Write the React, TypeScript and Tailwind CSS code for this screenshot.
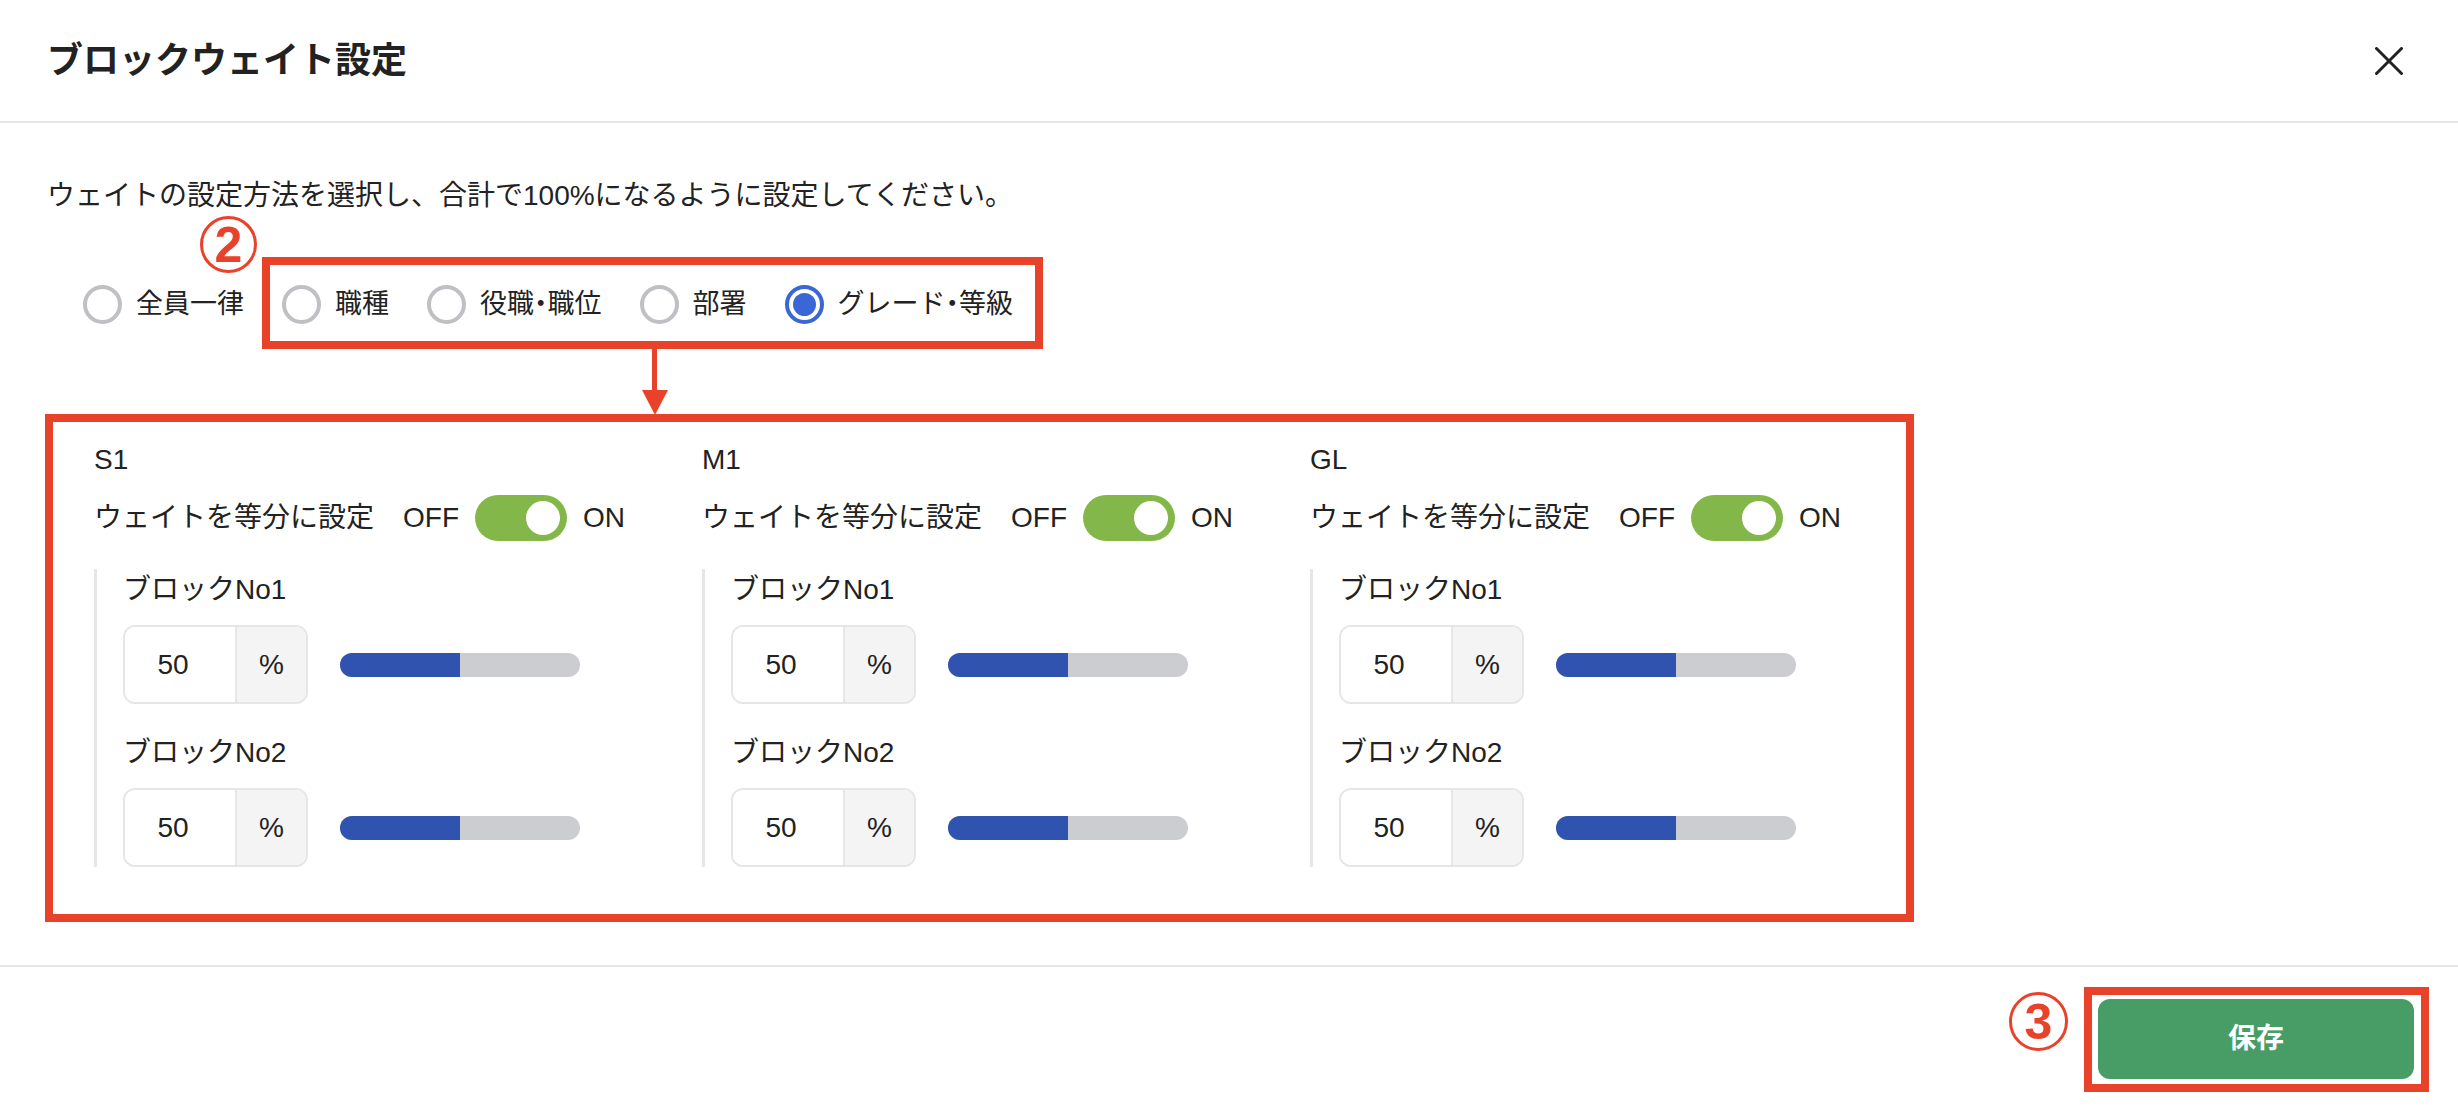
import React from "react";

const RED = "#e8432a";

function Radio({ checked }: { checked?: boolean }) {
  if (checked) {
    return (
      <div className="w-[39px] h-[39px] rounded-full border-[4px] border-[#3a66d6] flex items-center justify-center shrink-0">
        <div className="w-[23px] h-[23px] rounded-full bg-[#3a66d6]" />
      </div>
    );
  }
  return <div className="w-[39px] h-[39px] rounded-full border-[4px] border-[#bfbfc4] shrink-0" />;
}

function RadioItem({ label, checked }: { label: string; checked?: boolean }) {
  const parts = label.split("・");
  return (
    <div className="flex items-center gap-[14px]">
      <Radio checked={checked} />
      <span className="text-[27px] leading-[42px] text-[#222] whitespace-nowrap">
        {parts.map((p, i) => (
          <React.Fragment key={i}>
            {i > 0 && <span className="[font-feature-settings:'palt']">・</span>}
            {p}
          </React.Fragment>
        ))}
      </span>
    </div>
  );
}

function WeightInput() {
  return (
    <div className="flex items-center gap-[32px]">
      <div className="flex w-[185px] h-[79px] rounded-[12px] border-2 border-[#e6e6ea] overflow-hidden">
        <div className="w-[110px] flex items-center justify-center pr-[14px] text-[28px] text-[#222] bg-white">50</div>
        <div className="flex-1 flex items-center justify-center text-[28px] text-[#222] bg-[#f4f4f5] border-l-2 border-[#e6e6ea]">
          %
        </div>
      </div>
      <div className="w-[240px] h-[24px] rounded-full bg-[#cccdd0] overflow-hidden flex">
        <div className="w-1/2 h-full bg-[#3053b0]" />
      </div>
    </div>
  );
}

function Column({ name }: { name: string }) {
  return (
    <div className="flex flex-col">
      <div className="text-[28px] leading-[42px] text-[#222]">{name}</div>
      <div className="flex items-center mt-[14px]">
        <span className="text-[28px] leading-[42px] text-[#222]">ウェイトを等分に設定</span>
        <span className="text-[28px] leading-[42px] text-[#222] ml-[29px]">OFF</span>
        <div className="ml-[16px] w-[92px] h-[46px] rounded-full bg-[#84b74a] flex items-center justify-end pr-[7px]">
          <div className="w-[34px] h-[34px] rounded-full bg-white" />
        </div>
        <span className="text-[28px] leading-[42px] text-[#222] ml-[16px]">ON</span>
      </div>
      <div className="mt-[28px] border-l-[3px] border-[#e6e6ea] pl-[26px] flex flex-col">
        <div className="text-[28px] leading-[42px] text-[#222]">ブロックNo1</div>
        <div className="mt-[14px]">
          <WeightInput />
        </div>
        <div className="mt-[28px] text-[28px] leading-[42px] text-[#222]">ブロックNo2</div>
        <div className="mt-[14px]">
          <WeightInput />
        </div>
      </div>
    </div>
  );
}

function Circled({ n, className }: { n: string; className: string }) {
  return (
    <div
      className={
        "absolute rounded-full border-[3px] border-[#e8432a] flex items-center justify-center text-[#e8432a] font-bold text-[50px] leading-none " +
        className
      }
    >
      {n}
    </div>
  );
}

export default function App() {
  return (
    <div className="relative w-full h-[1110px] bg-white flex flex-col font-['Liberation_Sans','Noto_Sans_CJK_JP',sans-serif] overflow-hidden">
      {/* header */}
      <div className="h-[123px] shrink-0 border-b-2 border-[#e6e6ea] flex items-center justify-between pl-[47px] pr-[55px]">
        <h1 className="text-[36px] font-bold text-[#222] leading-none">ブロックウェイト設定</h1>
        <svg width="28" height="28" viewBox="0 0 28 28" className="text-[#222]">
          <path d="M1.5 1.5 L26.5 26.5 M26.5 1.5 L1.5 26.5" stroke="currentColor" strokeWidth="3" strokeLinecap="round" />
        </svg>
      </div>

      {/* body */}
      <div className="flex-1 pl-[47px] pt-[52px]">
        <p className="text-[28px] leading-[42px] text-[#222]">
          ウェイトの設定方法を選択し、合計で100%になるように設定してください。
        </p>
        <div className="mt-[66px] pl-[36px] flex items-center gap-[38px]">
          <RadioItem label="全員一律" />
          <RadioItem label="職種" />
          <RadioItem label="役職・職位" />
          <RadioItem label="部署" />
          <RadioItem label="グレード・等級" checked />
        </div>
        <div className="mt-[114px] pl-[47px] grid grid-cols-[608px_608px_608px]">
          <Column name="S1" />
          <Column name="M1" />
          <Column name="GL" />
        </div>
      </div>

      {/* footer */}
      <div className="h-[145px] shrink-0 border-t-2 border-[#e6e6ea] flex items-center justify-end pr-[44px]">
        <button className="w-[316px] h-[80px] rounded-[12px] bg-[#489d66] text-white text-[28px] font-bold">
          保存
        </button>
      </div>

      {/* annotations */}
      <div className="absolute left-[262px] top-[257px] w-[781px] h-[92px] border-[8px] border-[#e8432a]" />
      <div className="absolute left-[45px] top-[414px] w-[1869px] h-[508px] border-[8px] border-[#e8432a]" />
      <div className="absolute left-[652px] top-[349px] w-[5px] h-[45px] bg-[#e8432a]" />
      <svg className="absolute left-[642px] top-[390px]" width="26" height="25" viewBox="0 0 26 25">
        <polygon points="0,0 26,0 13,25" fill={RED} />
      </svg>
      <Circled n="2" className="left-[200px] top-[216px] w-[57px] h-[57px]" />
      <Circled n="3" className="left-[2009px] top-[992px] w-[59px] h-[59px]" />
      <div className="absolute left-[2084px] top-[987px] w-[345px] h-[105px] border-[8px] border-[#e8432a]" />
    </div>
  );
}
